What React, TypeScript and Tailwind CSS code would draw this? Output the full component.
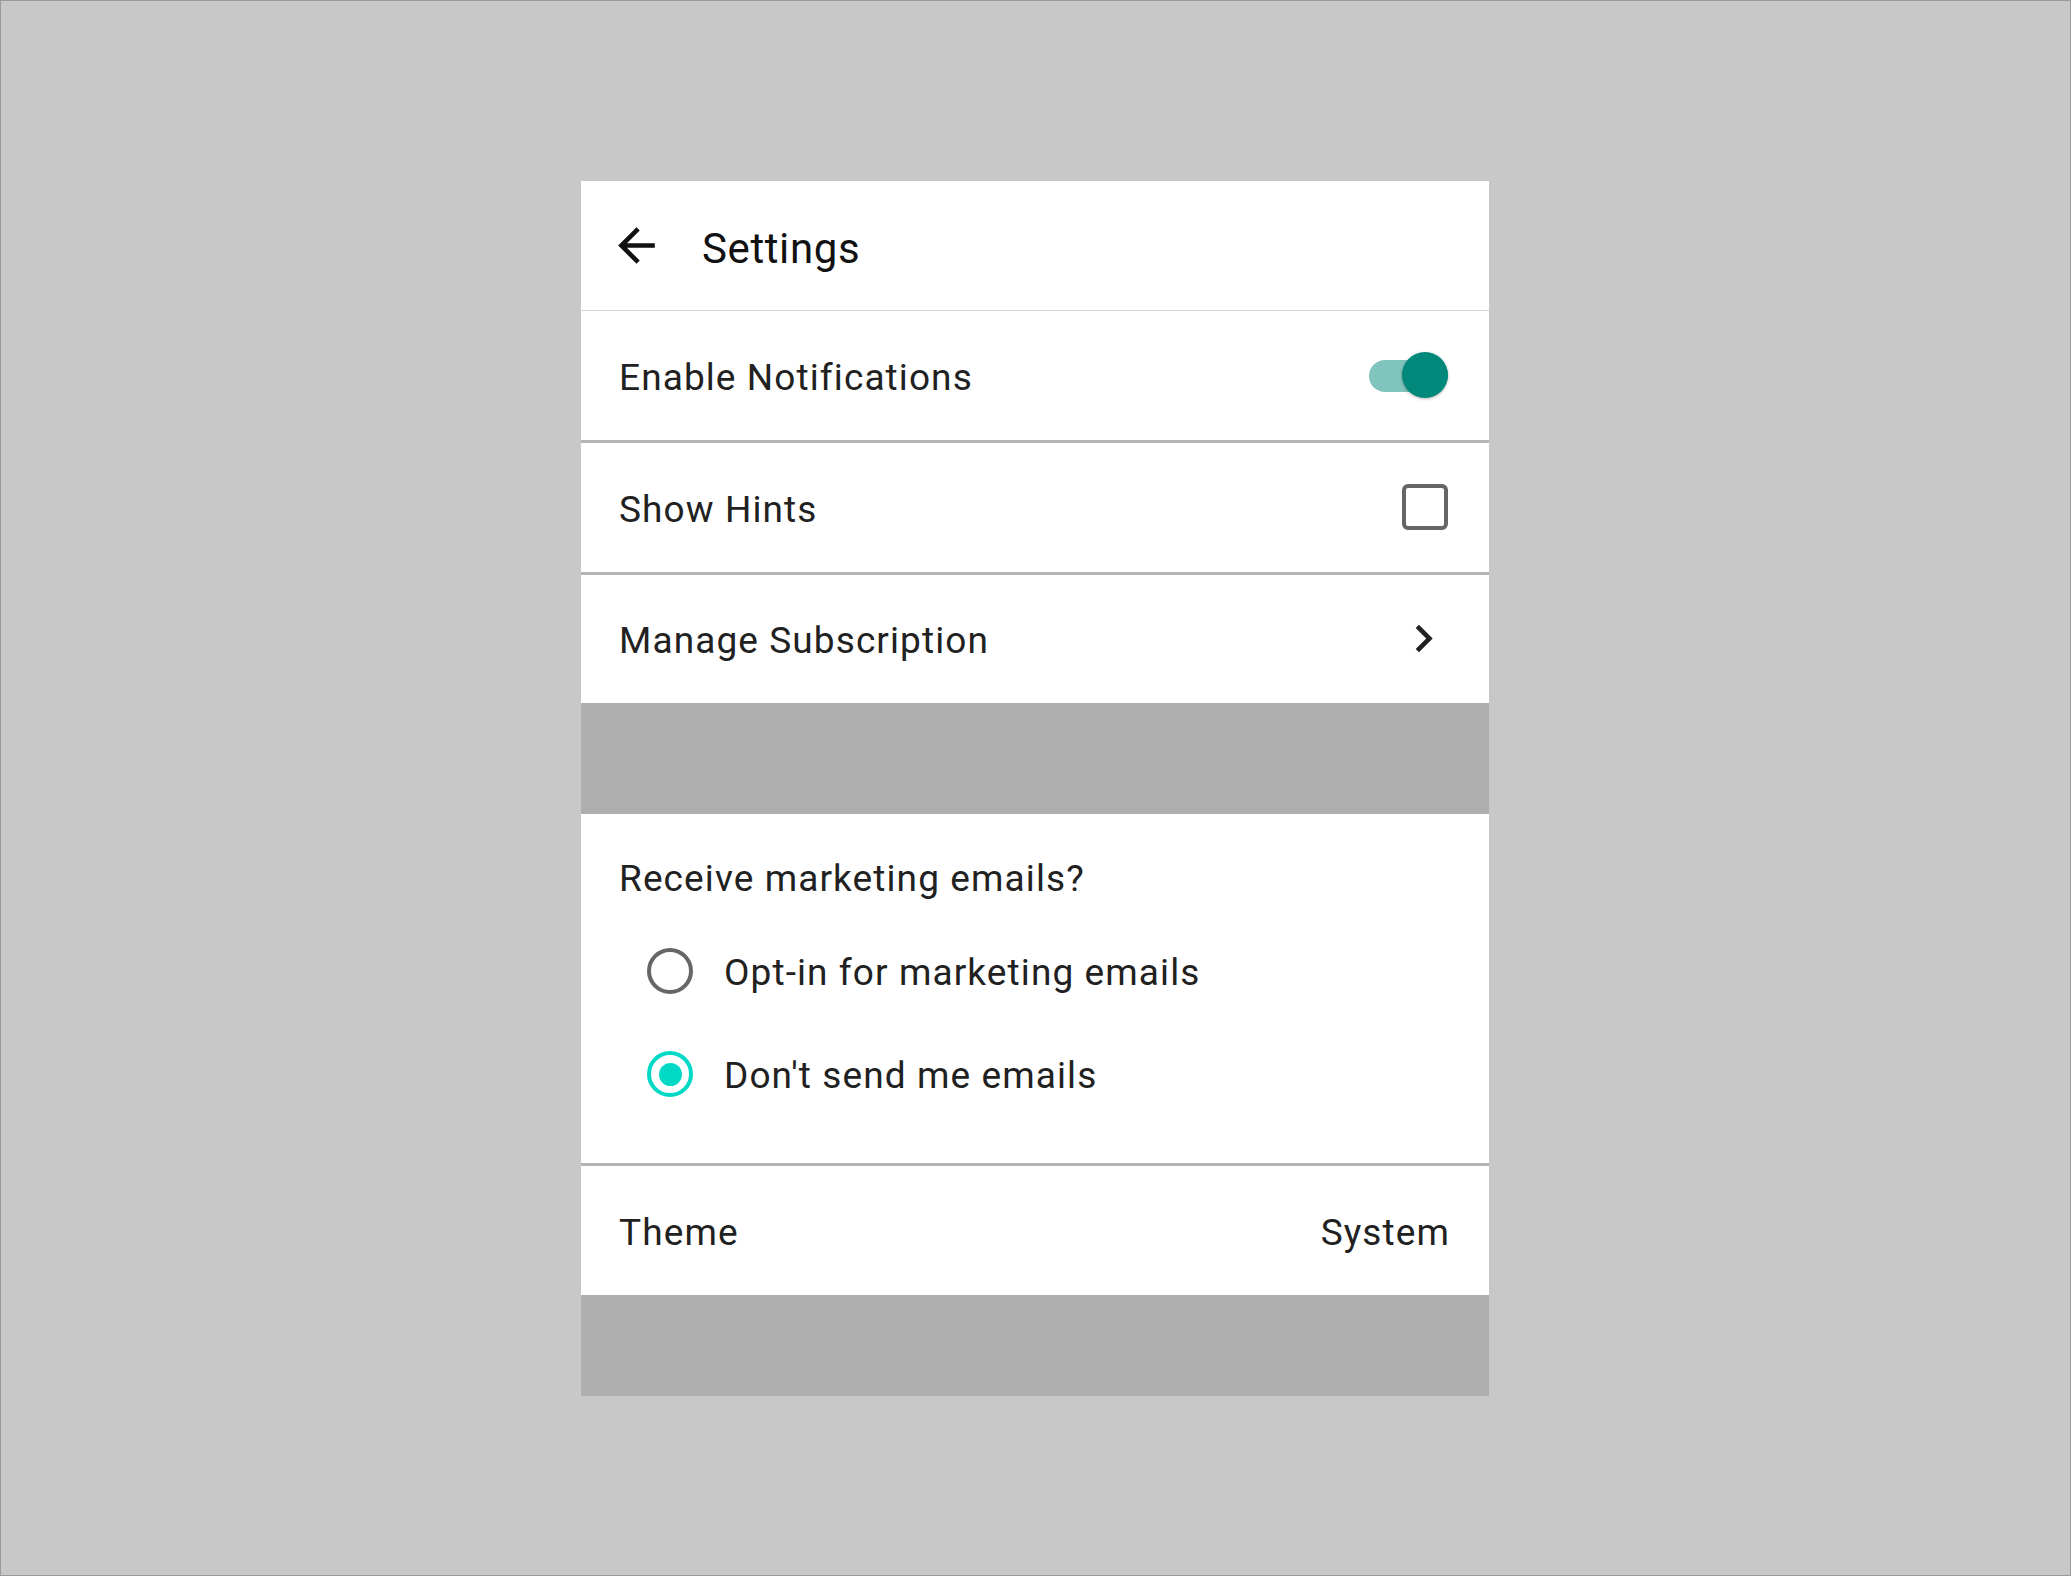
import React from "react";

function Row({ label, children, bottom }: { label: string; children?: React.ReactNode; bottom?: string }) {
  return (
    <div className={`flex h-[129px] shrink-0 items-center justify-between pl-[38px] pr-[41px] ${bottom ?? ""}`}>
      <span className="mt-[5px] text-[37px] leading-[44px] tracking-[1.1px] text-[#212121]">{label}</span>
      {children}
    </div>
  );
}

function Radio({ checked, label }: { checked?: boolean; label: string }) {
  return (
    <div className="flex h-[103px] items-center pl-[66px]">
      {checked ? (
        <div className="flex h-[46px] w-[46px] items-center justify-center rounded-full border-[4px] border-[#00d9c5]">
          <div className="h-[23px] w-[23px] rounded-full bg-[#00d9c5]" />
        </div>
      ) : (
        <div className="h-[46px] w-[46px] rounded-full border-[4px] border-[#666666]" />
      )}
      <span className="ml-[31px] mt-[3px] text-[37px] leading-[44px] tracking-[1.1px] text-[#212121]">{label}</span>
    </div>
  );
}

export default function App() {
  return (
    <div
      className="box-border flex h-[1576px] w-[2071px] items-center justify-start border border-[#9a9a9a] bg-[#c8c8c8] pl-[580px]"
      style={{ fontFamily: "Roboto, 'Noto Sans', sans-serif" }}
    >
      <div className="flex w-[908px] flex-col bg-white">
        {/* Header */}
        <div className="flex h-[130px] shrink-0 items-center border-b border-[#d6d6d6] pl-[28px]">
          <svg width="55" height="55" viewBox="0 0 24 24" className="shrink-0">
            <path d="M20 11H7.83l5.59-5.59L12 4l-8 8 8 8 1.41-1.41L7.83 13H20v-2z" fill="#111111" />
          </svg>
          <span className="ml-[38px] mt-[7px] text-[42px] leading-[50px] tracking-[0.6px] text-[#111111]">Settings</span>
        </div>

        <Row label="Enable Notifications" bottom="border-b-[3px] border-[#b4b4b4] h-[132px]">
          <div className="relative h-[47px] w-[79px]">
            <div className="absolute left-0 top-[8px] h-[32px] w-[79px] rounded-full bg-[#80c4bd]" />
            <div className="absolute right-0 top-0 h-[46px] w-[46px] rounded-full bg-[#00897b] shadow-[0_1px_3px_rgba(0,0,0,0.3)]" />
          </div>
        </Row>

        <Row label="Show Hints" bottom="border-b-[3px] border-[#b4b4b4] h-[132px]">
          <div className="h-[46px] w-[46px] rounded-[6px] border-[4px] border-[#666666]" />
        </Row>

        <div className="flex h-[128px] shrink-0 items-center justify-between pl-[38px] pr-[38px]">
          <span className="mt-[5px] text-[37px] leading-[44px] tracking-[1.1px] text-[#212121]">Manage Subscription</span>
          <svg width="55" height="55" viewBox="0 0 24 24">
            <path d="M10 6 8.59 7.41 13.17 12l-4.58 4.59L10 18l6-6z" fill="#212121" />
          </svg>
        </div>

        <div className="h-[111px] shrink-0 bg-[#afafaf]" />

        {/* Radio group */}
        <div className="flex h-[352px] shrink-0 flex-col border-b-[3px] border-[#b4b4b4] pt-[43px]">
          <div className="pl-[38px] text-[37px] leading-[44px] tracking-[1.1px] text-[#212121]">
            Receive marketing emails?
          </div>
          <div className="mt-[19px] flex flex-col">
            <Radio label="Opt-in for marketing emails" />
            <Radio checked label="Don't send me emails" />
          </div>
        </div>

        <div className="flex h-[129px] shrink-0 items-center justify-between pl-[38px] pr-[39px]">
          <span className="mt-[5px] text-[37px] leading-[44px] tracking-[1.1px] text-[#212121]">Theme</span>
          <span className="mt-[5px] text-[37px] leading-[44px] tracking-[1.1px] text-[#212121]">System</span>
        </div>

        <div className="h-[101px] shrink-0 bg-[#afafaf]" />
      </div>
    </div>
  );
}
